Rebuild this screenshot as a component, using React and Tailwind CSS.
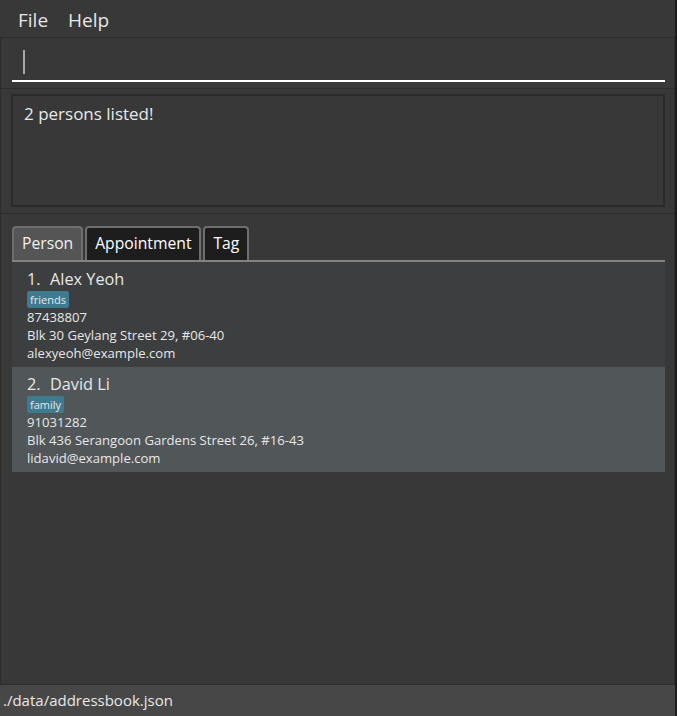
import React from 'react';

const persons = [
  {
    id: 1,
    name: 'Alex Yeoh',
    tag: 'friends',
    phone: '87438807',
    address: 'Blk 30 Geylang Street 29, #06-40',
    email: 'alexyeoh@example.com',
  },
  {
    id: 2,
    name: 'David Li',
    tag: 'family',
    phone: '91031282',
    address: 'Blk 436 Serangoon Gardens Street 26, #16-43',
    email: 'lidavid@example.com',
  },
];

const PersonCard = ({ person, index }) => (
  <div
    className={`h-[105px] pl-[15px] pt-[6px] ${
      index % 2 === 0 ? 'bg-[#3c3e3f]' : 'bg-[#515658]'
    }`}
  >
    <div className="flex text-[16.3px] leading-[22px] text-[#e8e8e8]">
      <span className="w-[23px]">{index + 1}.</span>
      <span>{person.name}</span>
    </div>
    <div className="mt-[1px] flex">
      <span className="rounded-[2px] bg-[#3e7b91] px-[3px] text-[11px] leading-[17px] text-[#e8e8e8]">
        {person.tag}
      </span>
    </div>
    <div className="text-[13.1px] leading-[18px] text-[#e8e8e8]">{person.phone}</div>
    <div className="text-[13.1px] leading-[18px] text-[#e8e8e8]">{person.address}</div>
    <div className="text-[13.1px] leading-[18px] text-[#e8e8e8]">{person.email}</div>
  </div>
);

const App = () => {
  return (
    <div
      className="flex h-[716px] w-[677px] bg-[#1d1d1d]"
      style={{ fontFamily: '"Open Sans", "Noto Sans", sans-serif' }}
    >
      <div className="flex w-[675px] flex-col bg-[#383838]">
        {/* 메뉴바 */}
        <div className="flex h-[38px] items-center gap-[20px] border-b border-[#2c2c2c] pl-[18px] pt-[3px] text-[19px] text-[#e6e6e6]">
          <span>File</span>
          <span>Help</span>
        </div>

        {/* 명령 입력 */}
        <div className="h-[51px] border-x border-b border-[#2c2c2c] pl-[11px] pr-[9px] pt-[12px]">
          <div className="h-[32px] border-b-2 border-white pl-[11px]">
            <div className="h-[24px] w-[2px] bg-[#a8a8a8]" />
          </div>
        </div>

        {/* 결과 표시 */}
        <div className="h-[125px] border-x border-b border-[#2c2c2c] pl-[10px] pr-[9px] pt-[5px]">
          <div className="h-[113px] border-2 border-[#2a2a2a] px-[11px] pt-[7px] text-[17px] leading-[22px] text-[#e8e8e8]">
            2 persons listed!
          </div>
        </div>

        {/* 탭 + 목록 */}
        <div className="flex flex-1 flex-col border-x border-[#2c2c2c] pl-[11px] pr-[9px] pt-[12px]">
          <div className="flex gap-[2px] border-b-2 border-[#828282]">
            <div className="flex h-[34px] items-center rounded-t-[4px] border-x-2 border-t-2 border-[#6e6e6e] bg-[#555555] px-[8px] text-[15.7px] text-[#f0f0f0]">
              Person
            </div>
            <div className="flex h-[34px] items-center rounded-t-[4px] border-x-2 border-t-2 border-[#6e6e6e] bg-[#1d1d1d] px-[8px] text-[15.7px] text-white">
              Appointment
            </div>
            <div className="flex h-[34px] items-center rounded-t-[4px] border-x-2 border-t-2 border-[#6e6e6e] bg-[#1d1d1d] px-[8px] text-[15.7px] text-white">
              Tag
            </div>
          </div>
          <div className="flex flex-col">
            {persons.map((p, i) => (
              <PersonCard key={p.id} person={p} index={i} />
            ))}
          </div>
        </div>

        {/* 상태바 */}
        <div className="flex h-[32px] items-center border-t border-[#2c2c2c] bg-[#474747] pl-[3px] text-[15px] text-[#e8e8e8]">
          ./data/addressbook.json
        </div>
      </div>
    </div>
  );
};

export default App;
